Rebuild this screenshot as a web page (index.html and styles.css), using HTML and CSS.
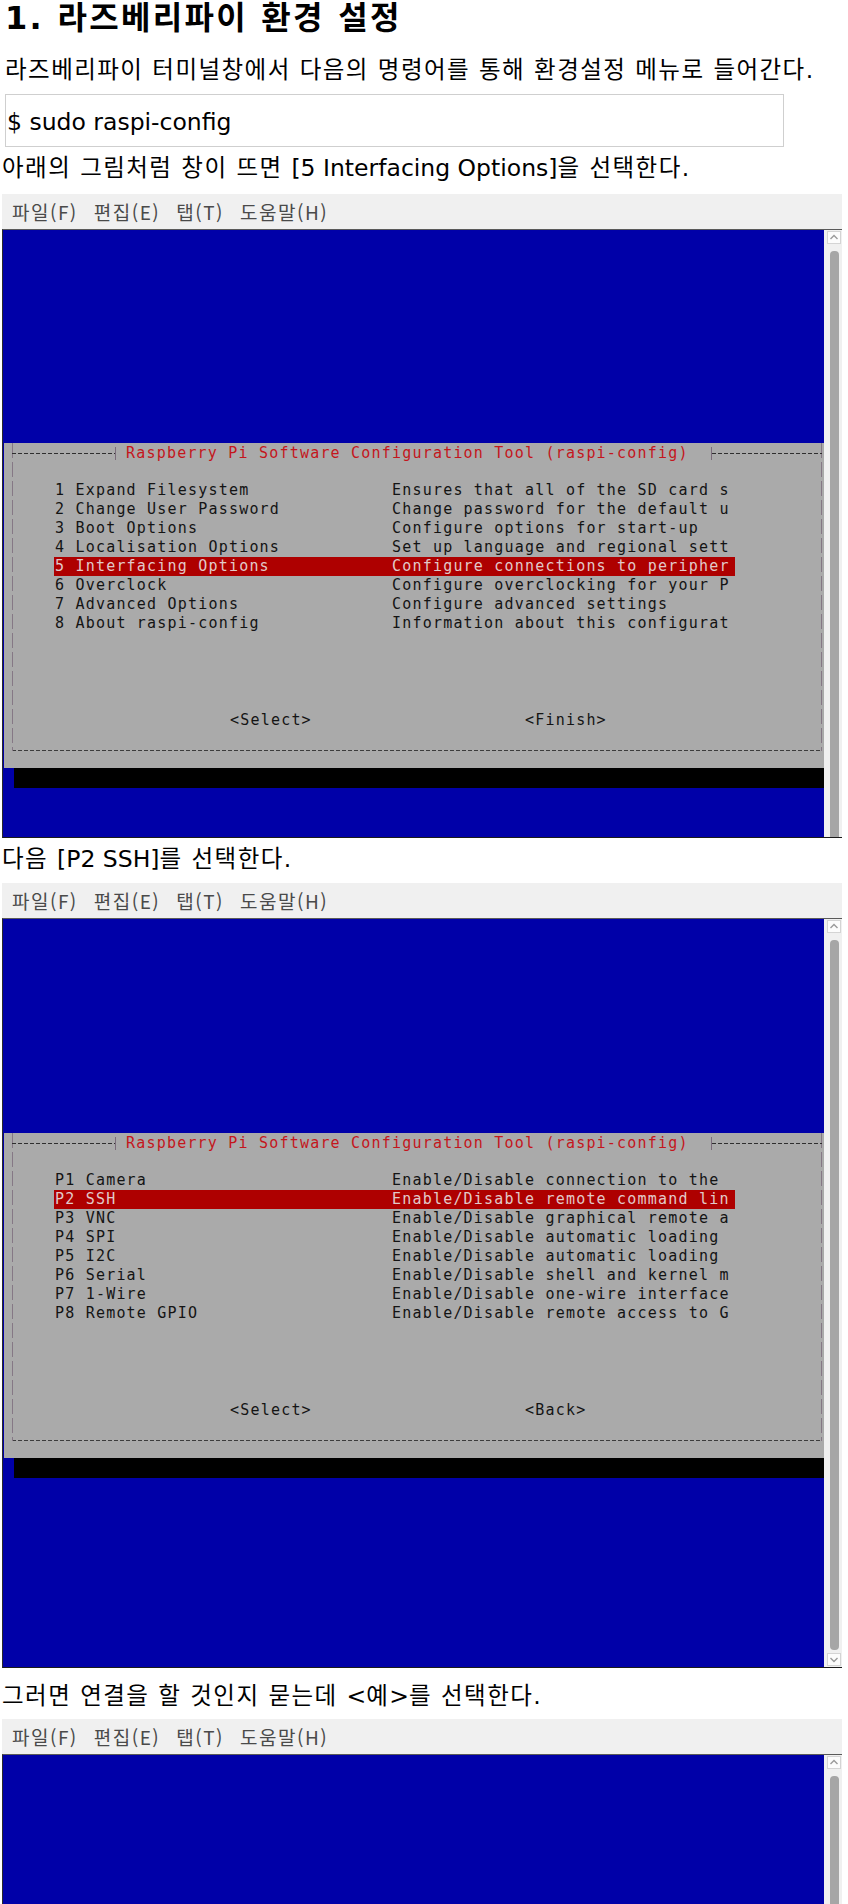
FILE: index.html
```html
<!DOCTYPE html>
<html lang="ko">
<head>
<meta charset="utf-8">
<title>라즈베리파이 환경 설정</title>
<link rel="stylesheet" href="styles.css">
</head>
<body>
<div class="page">
  <div class="intro">
    <h1 class="title">1. 라즈베리파이 환경 설정</h1>
    <p class="lead">라즈베리파이 터미널창에서 다음의 명령어를 통해 환경설정 메뉴로 들어간다.</p>
    <div class="code">$ sudo raspi-config</div>
  </div>
  <p class="text text--after-code">아래의 그림처럼 창이 뜨면 <span class="latin">[5 Interfacing Options]</span>을 선택한다.</p>

  <div class="term">
    <div class="term-menu"><span>파일(F)</span><span>편집(E)</span><span>탭(T)</span><span>도움말(H)</span></div>
    <div class="screen screen--t1">
      <div class="blue">
        <div class="dialog dialog--t1">
          <div class="frame">
            <div class="frame-title"><span class="dash"></span><span class="tick"></span><span class="title-text">Raspberry Pi Software Configuration Tool (raspi-config)</span><span class="tick"></span><span class="dash dash--fill"></span></div>
            <div class="menu-list">
              <div class="row"><span>1 Expand Filesystem</span><span>Ensures that all of the SD card s</span></div>
              <div class="row"><span>2 Change User Password</span><span>Change password for the default u</span></div>
              <div class="row"><span>3 Boot Options</span><span>Configure options for start-up</span></div>
              <div class="row"><span>4 Localisation Options</span><span>Set up language and regional sett</span></div>
              <div class="row row--sel"><span>5 Interfacing Options</span><span>Configure connections to peripher</span></div>
              <div class="row"><span>6 Overclock</span><span>Configure overclocking for your P</span></div>
              <div class="row"><span>7 Advanced Options</span><span>Configure advanced settings</span></div>
              <div class="row"><span>8 About raspi-config</span><span>Information about this configurat</span></div>
            </div>
            <div class="buttons"><span>&lt;Select&gt;</span><span>&lt;Finish&gt;</span></div>
          </div>
        </div>
      </div>
      <div class="scrollbar">
        <div class="sb-btn"><svg width="12" height="11" viewBox="0 0 12 11"><polyline points="2.5,7 6,3.5 9.5,7" fill="none" stroke="#9a9a9a" stroke-width="1.4"/></svg></div>
        <div class="sb-thumb"></div>
      </div>
    </div>
  </div>

  <p class="text text--after-t1">다음 <span class="latin">[P2 SSH]</span>를 선택한다.</p>

  <div class="term">
    <div class="term-menu"><span>파일(F)</span><span>편집(E)</span><span>탭(T)</span><span>도움말(H)</span></div>
    <div class="screen screen--t2">
      <div class="blue">
        <div class="dialog dialog--t2">
          <div class="frame">
            <div class="frame-title"><span class="dash"></span><span class="tick"></span><span class="title-text">Raspberry Pi Software Configuration Tool (raspi-config)</span><span class="tick"></span><span class="dash dash--fill"></span></div>
            <div class="menu-list">
              <div class="row"><span>P1 Camera</span><span>Enable/Disable connection to the</span></div>
              <div class="row row--sel"><span>P2 SSH</span><span>Enable/Disable remote command lin</span></div>
              <div class="row"><span>P3 VNC</span><span>Enable/Disable graphical remote a</span></div>
              <div class="row"><span>P4 SPI</span><span>Enable/Disable automatic loading</span></div>
              <div class="row"><span>P5 I2C</span><span>Enable/Disable automatic loading</span></div>
              <div class="row"><span>P6 Serial</span><span>Enable/Disable shell and kernel m</span></div>
              <div class="row"><span>P7 1-Wire</span><span>Enable/Disable one-wire interface</span></div>
              <div class="row"><span>P8 Remote GPIO</span><span>Enable/Disable remote access to G</span></div>
            </div>
            <div class="buttons"><span>&lt;Select&gt;</span><span>&lt;Back&gt;</span></div>
          </div>
        </div>
      </div>
      <div class="scrollbar">
        <div class="sb-btn"><svg width="12" height="11" viewBox="0 0 12 11"><polyline points="2.5,7 6,3.5 9.5,7" fill="none" stroke="#9a9a9a" stroke-width="1.4"/></svg></div>
        <div class="sb-thumb sb-thumb--end"></div>
        <div class="sb-btn sb-btn--down"><svg width="12" height="11" viewBox="0 0 12 11"><polyline points="2.5,4 6,7.5 9.5,4" fill="none" stroke="#9a9a9a" stroke-width="1.4"/></svg></div>
      </div>
    </div>
  </div>

  <p class="text text--after-t2">그러면 연결을 할 것인지 묻는데 <span class="latin">&lt;</span>예<span class="latin">&gt;</span>를 선택한다.</p>

  <div class="term">
    <div class="term-menu"><span>파일(F)</span><span>편집(E)</span><span>탭(T)</span><span>도움말(H)</span></div>
    <div class="screen screen--t3">
      <div class="blue"></div>
      <div class="scrollbar">
        <div class="sb-btn"><svg width="12" height="11" viewBox="0 0 12 11"><polyline points="2.5,7 6,3.5 9.5,7" fill="none" stroke="#9a9a9a" stroke-width="1.4"/></svg></div>
        <div class="sb-thumb"></div>
      </div>
    </div>
  </div>
</div>
</body>
</html>
```

FILE: styles.css
```css
html, body {
  margin: 0;
  padding: 0;
}
html {
  overflow: hidden;
}
body {
  font-family: "DejaVu Sans", "Noto Sans CJK KR", sans-serif;
  font-size: 23.5px;
  color: #000;
  background: #fff;
}
.page {
  padding: 0 2px;
}
.intro {
  padding-left: 3px;
}
.title {
  margin: 0 0 14px;
  font-size: 32px;
  line-height: 36px;
  font-weight: bold;
  letter-spacing: 2.3px;
}
.lead {
  margin: 0 0 4px;
  line-height: 40px;
  letter-spacing: 1.45px;
  white-space: nowrap;
}
.code {
  width: 776px;
  border: 1px solid #cfcfcf;
  padding: 14px 0 10px 1px;
  line-height: 27px;
}
.text {
  margin: 0;
  line-height: 40px;
  letter-spacing: 1.45px;
  white-space: nowrap;
}
.latin {
  letter-spacing: 0;
}
.text--after-code { margin: 1px 0 6px; }
.text--after-t1 { margin: 1px 0 4px; }
.text--after-t2 { margin: 8px 0 3px; }

/* terminal window */
.term {
  width: 840px;
}
.term-menu {
  display: flex;
  align-items: center;
  gap: 16px;
  height: 35px;
  padding-left: 10px;
  background: #f0f0f0;
  font-family: "Noto Sans CJK KR", sans-serif;
  font-size: 19px;
  letter-spacing: 1.5px;
  color: #4a4a4a;
}
.screen {
  display: flex;
  box-sizing: border-box;
  border-top: 1px solid #5a5a5a;
  border-left: 1px solid #2a2a2a;
}
.screen--t1 { height: 609px; border-bottom: 1px solid #1a1a1a; }
.screen--t2 { height: 750px; border-bottom: 1px solid #1a1a1a; }
.screen--t3 { height: 150px; }
.blue {
  flex: 1;
  background: #0000a8;
  overflow: hidden;
}
.scrollbar {
  width: 18px;
  flex: none;
  display: flex;
  flex-direction: column;
  background: #f0f0f0;
}
.sb-btn {
  box-sizing: border-box;
  width: 14px;
  height: 13px;
  margin: 1px 1px 0 3px;
  background: #fcfcfc;
  border: 1px solid #d4d4d4;
  display: flex;
  align-items: center;
  justify-content: center;
}
.sb-btn--down {
  margin: 3px 1px 1px 3px;
}
.sb-thumb {
  flex: 1;
  margin: 7px 3px 0 6px;
  background: #a6a6a6;
  border-radius: 4px 4px 0 0;
}
.sb-thumb--end {
  border-radius: 4px;
}

/* whiptail dialog */
.dialog {
  box-sizing: border-box;
  width: 826px;
  height: 325px;
  margin-left: 1px;
  padding: 10px 8px 7px;
  background: #aaaaaa;
  box-shadow: 10px 20px 0 #000;
  font-family: "DejaVu Sans Mono", "Liberation Mono", monospace;
  font-size: 15px;
  letter-spacing: 1.2px;
  color: #141414;
}
.dialog--t1 { margin-top: 213px; }
.dialog--t2 { margin-top: 214px; }
.frame {
  box-sizing: border-box;
  height: 100%;
  padding-left: 42px;
  background:
    repeating-linear-gradient(to bottom, #857885 0 15px, transparent 15px 19px) left top / 1px 100% no-repeat,
    repeating-linear-gradient(to bottom, #857885 0 15px, transparent 15px 19px) right top / 1px 100% no-repeat,
    repeating-linear-gradient(to right, #3c3c3c 0 4px, transparent 4px 6px) left bottom / 100% 1px no-repeat;
}
.frame-title {
  display: flex;
  align-items: center;
  height: 20px;
  margin: -10px 0 0 -42px;
}
.dash {
  width: 103px;
  height: 1px;
  flex: none;
  background: repeating-linear-gradient(to right, #2e2e2e 0 4px, transparent 4px 6px);
}
.dash--fill {
  flex: 1;
}
.tick {
  width: 1px;
  height: 13px;
  flex: none;
  background: #7a6c7a;
}
.title-text {
  margin: 0 22px 0 10px;
  color: #c4161c;
  line-height: 20px;
  white-space: nowrap;
}
.menu-list {
  margin-top: 18px;
  width: 681px;
}
.row {
  display: grid;
  grid-template-columns: 337px 1fr;
  height: 19px;
  line-height: 19px;
  padding-left: 1px;
  white-space: nowrap;
}
.row--sel {
  background: #ae0000;
  color: #e2c9c9;
}
.buttons {
  display: grid;
  grid-template-columns: 295px auto;
  margin-top: 78px;
  padding-left: 176px;
  height: 19px;
  line-height: 19px;
}
```
